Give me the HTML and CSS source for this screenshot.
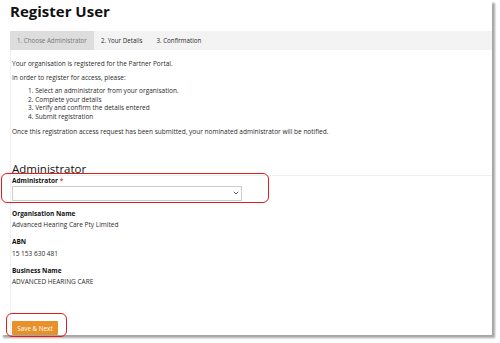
FILE: index.html
```html
<!DOCTYPE html>
<html lang="en">
  <head>
    <meta charset="UTF-8" />
    <title>Register User</title>
    <link rel="stylesheet" href="styles.css">
  </head>
  <body>
    <div class="shot">
      <div class="screen">
        <h1 class="title">Register User</h1>
        <div class="tabs">
          <span class="tab active">1. Choose Administrator</span>
          <span class="tab">2. Your Details</span>
          <span class="tab">3. Confirmation</span>
        </div>
        <div class="panel">
          <p>Your organisation is registered for the Partner Portal.</p>
          <p>In order to register for access, please:</p>
          <ol class="steps">
            <li>Select an administrator from your organisation.</li>
            <li>Complete your details</li>
            <li>Verify and confirm the details entered</li>
            <li>Submit registration</li>
          </ol>
          <p>Once this registration access request has been submitted, your nominated administrator will be notified.</p>

          <h2 class="section">Administrator</h2>
          <div class="label">Administrator <span class="req">*</span></div>
          <div class="select">
            <svg width="6" height="4" viewBox="0 0 6 4"><path d="M0.8 0.8 L3 3 L5.2 0.8" fill="none" stroke="#444" stroke-width="0.9"/></svg>
          </div>

          <div class="field">
            <div class="label">Organisation Name</div>
            <div class="value">Advanced Hearing Care Pty Limited</div>
          </div>
          <div class="field">
            <div class="label">ABN</div>
            <div class="value">15 153 630 481</div>
          </div>
          <div class="field">
            <div class="label">Business Name</div>
            <div class="value">ADVANCED HEARING CARE</div>
          </div>

          <button class="btn">Save &amp; Next</button>
        </div>
      </div>
      <!-- annotation boxes drawn over the screenshot -->
      <div class="mark mark-select"></div>
      <div class="mark mark-btn"></div>
    </div>
  </body>
</html>
```

FILE: styles.css
```css
html {
  box-sizing: border-box;
}
body {
  margin: 0;
  background-color: #ffffff;
  font-family: "Open Sans", "Liberation Sans", sans-serif;
  color: #2b2b2b;
}
.shot {
  position: relative;
  width: 500px;
  height: 343px;
}
.screen {
  width: 492px;
  height: 335px;
  overflow: hidden;
  background-color: #ffffff;
  box-shadow: 3px 3px 2px rgba(0, 0, 0, 0.35);
  padding-left: 10px;
  box-sizing: border-box;
}
.title {
  margin: 0;
  font-size: 15px;
  line-height: 22px;
  font-weight: 700;
  color: #111111;
}
.tabs {
  margin-top: 9px;
  height: 19px;
  display: flex;
  background-color: #f3f3f3;
}
.tab {
  padding: 0 7px;
  font-size: 6.2px;
  line-height: 19px;
  color: #2b2b2b;
}
.tab.active {
  background-color: #dddddd;
  color: #777777;
}
.panel {
  border-left: 1px solid #f0f0f0;
  padding: 4px 0 0 1px;
  font-size: 6.5px;
}
.panel p {
  margin: 5px 0;
  line-height: 9px;
}
.steps {
  margin: 5px 0;
  padding-left: 16px;
  list-style-position: inside;
  line-height: 8.7px;
}
.section {
  margin: 27px 0 0 0;
  font-size: 11.5px;
  font-weight: 400;
  line-height: 12px;
  color: #111111;
  border-bottom: 1px solid #eeeeee;
}
.label {
  font-weight: 700;
  line-height: 8px;
  color: #111111;
}
.section + .label {
  margin-top: 1px;
}
.req {
  color: #d9534f;
}
.select {
  margin-top: 1px;
  width: 230px;
  height: 15px;
  border: 1px solid #cccccc;
  box-sizing: border-box;
  display: flex;
  justify-content: flex-end;
  align-items: center;
  padding-right: 2px;
}
.field {
  margin-top: 9px;
}
.field .value {
  margin-top: 3.5px;
  line-height: 8px;
}
.btn {
  margin-top: 35px;
  width: 46px;
  height: 14px;
  padding: 0;
  border: none;
  border-radius: 1px;
  background-color: #e8912a;
  color: #ffffff;
  font-family: "Open Sans", "Liberation Sans", sans-serif;
  font-size: 6.3px;
}
.mark {
  position: absolute;
  border: 1.5px solid #e31b1b;
  border-radius: 6px;
  box-sizing: border-box;
}
.mark-select {
  left: 1px;
  top: 173px;
  width: 268px;
  height: 30px;
}
.mark-btn {
  left: 6px;
  top: 313px;
  width: 61px;
  height: 24px;
}
```
